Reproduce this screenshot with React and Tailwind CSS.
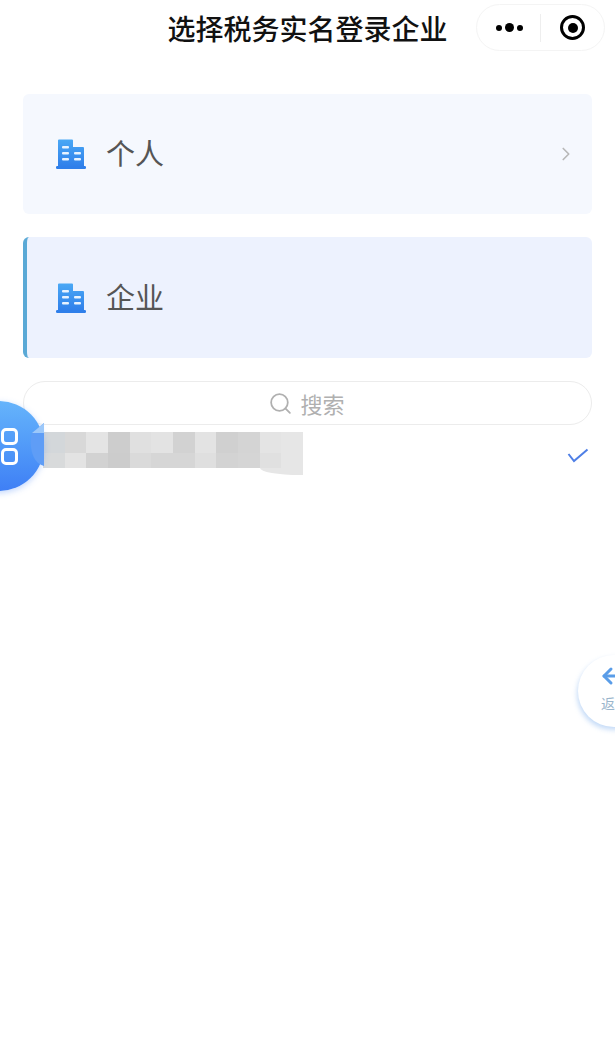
import { ChevronRight, Search, ArrowLeft } from 'lucide-react';

const topCells = ['#d3d7da', '#d8d8d8', '#e4e4e4', '#cdcdcd', '#e0e0e0', '#e3e3e3', '#d2d2d2', '#e3e3e3', '#d0d0d0', '#d4d4d4', '#e4e4e4', '#e6e6e6'];
const bottomCells = ['#d8dadb', '#e3e3e3', '#d2d2d2', '#cccccc', '#dadada', '#d6d6d6', '#d6d6d6', '#dfdfdf', '#d3d3d3', '#d5d5d5', '#e0e0e0', '#e6e6e6'];

function BuildingIcon() {
  return (
    <svg width="32" height="32" viewBox="0 0 32 32" className="shrink-0">
      <defs>
        <linearGradient id="building" x1="0" y1="0" x2="0" y2="1">
          <stop offset="0" stopColor="#4aa8f5" />
          <stop offset="1" stopColor="#2f7fea" />
        </linearGradient>
      </defs>
      <path d="M3 2.5a1 1 0 0 1 1-1h13a1 1 0 0 1 1 1V9h10a1 1 0 0 1 1 1v19H3z" fill="url(#building)" />
      <rect x="1" y="28" width="30" height="3" rx="1.2" fill="#2f7fea" />
      <rect x="7" y="8" width="7" height="2.6" rx="1" fill="#e8f3ff" />
      <rect x="7" y="14" width="7" height="2.6" rx="1" fill="#e8f3ff" />
      <rect x="7" y="20" width="7" height="2.6" rx="1" fill="#e8f3ff" />
      <rect x="19" y="14" width="7" height="2.6" rx="1" fill="#e8f3ff" />
      <rect x="19" y="20" width="7" height="2.6" rx="1" fill="#e8f3ff" />
    </svg>
  );
}

export default function App() {
  return (
    <div className="relative h-[1061px] w-[615px] overflow-hidden bg-white font-['Noto_Sans_CJK_SC',sans-serif]">
      {/* header */}
      <div className="relative flex h-[58px] items-center justify-center pb-[2px]">
        <h1 className="text-[28px] leading-none font-medium text-[#111]">选择税务实名登录企业</h1>
        <div className="absolute top-[4px] right-[10px] flex h-[47px] w-[129px] items-center rounded-full border border-[#f4f4f4] bg-white">
          <div className="flex w-[63px] items-center justify-center gap-[3px] pl-[2px]">
            <span className="h-[6px] w-[6px] rounded-full bg-black" />
            <span className="h-[9px] w-[9px] rounded-full bg-black" />
            <span className="h-[6px] w-[6px] rounded-full bg-black" />
          </div>
          <div className="h-[28px] w-px bg-[#eeeeee]" />
          <div className="flex flex-1 items-center justify-center">
            <div className="flex h-[25px] w-[25px] items-center justify-center rounded-full border-[3px] border-black">
              <span className="h-[10px] w-[10px] rounded-full bg-black" />
            </div>
          </div>
        </div>
      </div>

      <div className="mx-[23px] mt-[36px] flex flex-col">
        <div className="flex h-[120px] items-center rounded-md bg-[#f5f8fe] pr-[15px] pl-[32px]">
          <BuildingIcon />
          <span className="ml-[19px] flex-1 pb-[3px] text-[29px] leading-none text-[#555]">个人</span>
          <ChevronRight size={22} strokeWidth={1.8} className="text-[#b8b8b8]" />
        </div>

        <div className="mt-[23px] flex h-[121px] items-center rounded-md border-l-[4px] border-[#5aa9d6] bg-[#edf2fe] pl-[28px]">
          <BuildingIcon />
          <span className="ml-[19px] pb-[2px] text-[29px] leading-none text-[#555]">企业</span>
        </div>

        <div className="mt-[23px] flex h-[44px] items-center justify-center gap-[7px] rounded-full border border-[#ececec] bg-white pr-[2px]">
          <Search size={25} strokeWidth={1.7} className="text-[#b0b0b0]" />
          <span className="text-[22px] leading-none text-[#b0b0b0]">搜索</span>
        </div>

        <div className="mt-[7px] flex items-start justify-between">
          <div className="ml-[20px] flex w-[260px] flex-col">
            <div className="grid h-[21px] grid-cols-12">
              {topCells.map((c, i) => <div key={i} style={{ backgroundColor: c }} />)}
            </div>
            <div className="grid h-[15px] grid-cols-12">
              {bottomCells.map((c, i) => <div key={i} style={{ backgroundColor: c }} />)}
            </div>
            <div className="ml-auto h-[7px] w-[43px] rounded-bl-[40px_7px] bg-[#e6e6e6]" />
          </div>
          <svg width="22" height="15" viewBox="0 0 22 15" fill="none" className="mt-[16px] mr-[3px]">
            <path d="M1.5 6 L7 13 L20.5 1.5" stroke="#4f7fe6" strokeWidth="2" />
          </svg>
        </div>
      </div>

      {/* floating menu button */}
      <div className="absolute top-[401px] left-[-46px] flex h-[90px] w-[90px] items-center justify-end rounded-full bg-gradient-to-b from-[#66b4fb] to-[#3f7ff5] pr-[26px] shadow-[0_2px_6px_rgba(80,140,250,0.35)]">
        <div className="flex flex-col gap-[3px]">
          <span className="h-[17px] w-[17px] rounded-[5px] border-[3px] border-white" />
          <span className="h-[17px] w-[17px] rounded-[5px] border-[3px] border-white" />
        </div>
      </div>
      <svg width="16" height="44" viewBox="0 0 16 44" className="absolute top-[423px] left-[28px]">
        <path d="M16 0 V43 Q5 40 3 24 Q2 16 4 10 Z" fill="#5f9df6" />
        <path d="M16 0 V10 H4 Z" fill="#9cc8fa" />
      </svg>

      {/* floating back button */}
      <div className="absolute top-[655px] left-[578px] flex h-[72px] w-[72px] flex-col items-start rounded-full bg-white pt-[9px] pl-[21px] shadow-[-1px_3px_5px_rgba(110,165,235,0.4)]">
        <ArrowLeft size={24} strokeWidth={3} className="text-[#5a9de8]" />
        <span className="mt-[8px] pl-[2px] text-[14px] leading-none whitespace-nowrap text-[#9ab5cc]">返回</span>
      </div>
    </div>
  );
}
